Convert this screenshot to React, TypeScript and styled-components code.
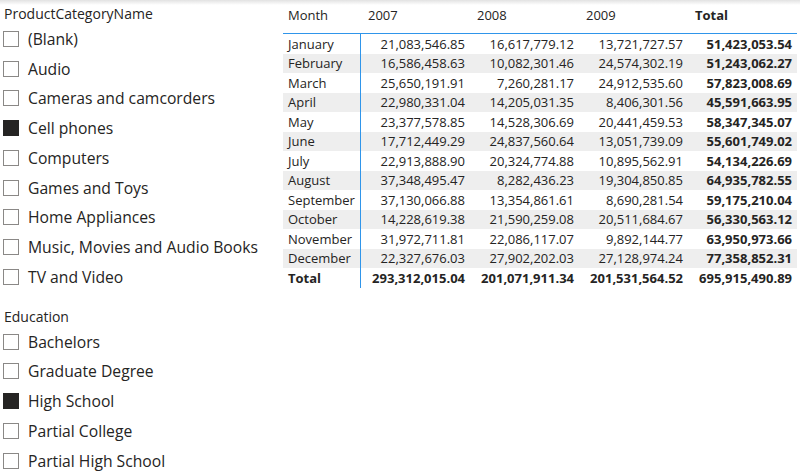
import React from "react";
import styled, { createGlobalStyle } from "styled-components";

const Global = createGlobalStyle`
  html, body { margin: 0; padding: 0; background: #fff; }
  body { font-family: "Open Sans", "Noto Sans", sans-serif; color: #252423; }
`;

const Page = styled.div`
  width: 800px;
  height: 476px;
  overflow: hidden;
  display: flex;
  background: linear-gradient(#e2e2e2, #ffffff 5px) no-repeat;
`;

const SlicerColumn = styled.div`
  width: 283px;
  flex: none;
  display: flex;
  flex-direction: column;
  gap: 15px;
`;

const Slicer = styled.div`
  display: flex;
  flex-direction: column;
  padding-left: 3px;
`;

const SlicerTitle = styled.div<{ $top: number }>`
  margin-top: ${(p) => p.$top}px;
  height: 20px;
  line-height: 20px;
  font-size: 14px;
  padding-left: 1px;
`;

const Item = styled.div`
  height: 29.75px;
  display: flex;
  align-items: center;
  gap: 9px;
  font-size: 15.7px;
`;

const Box = styled.span<{ $checked: boolean }>`
  width: 14px;
  height: 14px;
  flex: none;
  border: 1px solid ${(p) => (p.$checked ? "#252423" : "#8a8886")};
  background: ${(p) => (p.$checked ? "#252423" : "#fff")};
`;

const Table = styled.div`
  width: 514px;
  display: flex;
  flex-direction: column;
  font-size: 13px;
`;

const Row = styled.div<{ $band?: boolean; $h: number }>`
  display: grid;
  grid-template-columns: 78px repeat(4, 109px);
  height: ${(p) => p.$h}px;
  align-items: center;
  background: ${(p) => (p.$band ? "#eeeeee" : "transparent")};
`;

const HeaderRow = styled(Row)`
  border-bottom: 1px solid #2f95ea;
  align-items: center;
`;

const Cell = styled.div<{ $bold?: boolean; $right?: boolean; $first?: boolean }>`
  height: 100%;
  display: flex;
  align-items: center;
  justify-content: ${(p) => (p.$right ? "flex-end" : "flex-start")};
  padding: ${(p) => (p.$right ? "0 5px 0 0" : "0 0 0 5px")};
  font-weight: ${(p) => (p.$bold ? 700 : 400)};
  white-space: nowrap;
  box-sizing: border-box;
  border-right: ${(p) => (p.$first ? "1px solid #2f95ea" : "none")};
`;

const HeadCell = styled.div<{ $bold?: boolean; $pad: number }>`
  padding-left: ${(p) => p.$pad}px;
  font-weight: ${(p) => (p.$bold ? 700 : 400)};
  padding-bottom: 3px;
`;

const categories = [
  ["(Blank)", false],
  ["Audio", false],
  ["Cameras and camcorders", false],
  ["Cell phones", true],
  ["Computers", false],
  ["Games and Toys", false],
  ["Home Appliances", false],
  ["Music, Movies and Audio Books", false],
  ["TV and Video", false],
] as const;

const education = [
  ["Bachelors", false],
  ["Graduate Degree", false],
  ["High School", true],
  ["Partial College", false],
  ["Partial High School", false],
] as const;

const rows: [string, string, string, string, string][] = [
  ["January", "21,083,546.85", "16,617,779.12", "13,721,727.57", "51,423,053.54"],
  ["February", "16,586,458.63", "10,082,301.46", "24,574,302.19", "51,243,062.27"],
  ["March", "25,650,191.91", "7,260,281.17", "24,912,535.60", "57,823,008.69"],
  ["April", "22,980,331.04", "14,205,031.35", "8,406,301.56", "45,591,663.95"],
  ["May", "23,377,578.85", "14,528,306.69", "20,441,459.53", "58,347,345.07"],
  ["June", "17,712,449.29", "24,837,560.64", "13,051,739.09", "55,601,749.02"],
  ["July", "22,913,888.90", "20,324,774.88", "10,895,562.91", "54,134,226.69"],
  ["August", "37,348,495.47", "8,282,436.23", "19,304,850.85", "64,935,782.55"],
  ["September", "37,130,066.88", "13,354,861.61", "8,690,281.54", "59,175,210.04"],
  ["October", "14,228,619.38", "21,590,259.08", "20,511,684.67", "56,330,563.12"],
  ["November", "31,972,711.81", "22,086,117.07", "9,892,144.77", "63,950,973.66"],
  ["December", "22,327,676.03", "27,902,202.03", "27,128,974.24", "77,358,852.31"],
];

const totals = ["293,312,015.04", "201,071,911.34", "201,531,564.52", "695,915,490.89"];

function SlicerBlock({ title, items, top }: { title: string; items: readonly (readonly [string, boolean])[]; top: number }) {
  return (
    <Slicer>
      <SlicerTitle $top={top}>{title}</SlicerTitle>
      {items.map(([label, checked]) => (
        <Item key={label}>
          <Box $checked={checked} />
          <span>{label}</span>
        </Item>
      ))}
    </Slicer>
  );
}

export default function App() {
  return (
    <>
      <Global />
      <Page>
        <SlicerColumn>
          <SlicerBlock title="ProductCategoryName" items={categories} top={4} />
          <SlicerBlock title="Education" items={education} top={0} />
        </SlicerColumn>
        <Table>
          <HeaderRow $h={33}>
            <HeadCell $pad={5}>Month</HeadCell>
            <HeadCell $pad={7}>2007</HeadCell>
            <HeadCell $pad={7}>2008</HeadCell>
            <HeadCell $pad={7}>2009</HeadCell>
            <HeadCell $pad={7} $bold>Total</HeadCell>
          </HeaderRow>
          {rows.map((r, i) => (
            <Row key={r[0]} $h={19.5} $band={i % 2 === 1}>
              <Cell $first>{r[0]}</Cell>
              <Cell $right>{r[1]}</Cell>
              <Cell $right>{r[2]}</Cell>
              <Cell $right>{r[3]}</Cell>
              <Cell $right $bold>{r[4]}</Cell>
            </Row>
          ))}
          <Row $h={20}>
            <Cell $first $bold>Total</Cell>
            {totals.map((t) => (
              <Cell key={t} $right $bold>{t}</Cell>
            ))}
          </Row>
        </Table>
      </Page>
    </>
  );
}
